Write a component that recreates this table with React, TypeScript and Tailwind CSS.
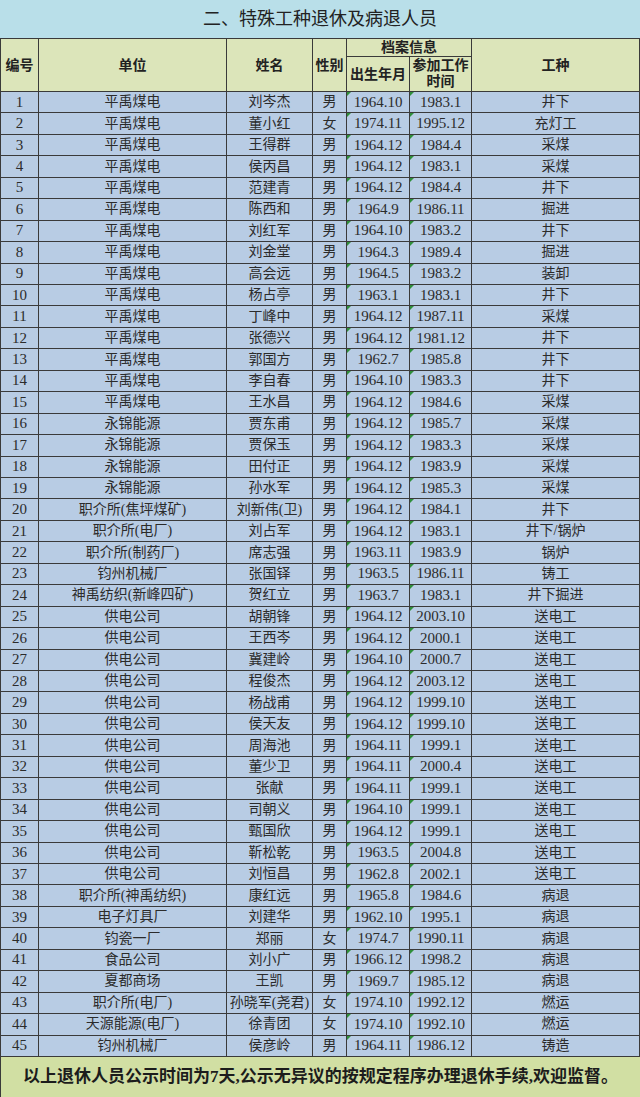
import React from "react";

type Row = [string, string, string, string, string, string, string];

const rows: Row[] = [
  ["1", "平禹煤电", "刘岑杰", "男", "1964.10", "1983.1", "井下"],
  ["2", "平禹煤电", "董小红", "女", "1974.11", "1995.12", "充灯工"],
  ["3", "平禹煤电", "王得群", "男", "1964.12", "1984.4", "采煤"],
  ["4", "平禹煤电", "侯丙昌", "男", "1964.12", "1983.1", "采煤"],
  ["5", "平禹煤电", "范建青", "男", "1964.12", "1984.4", "井下"],
  ["6", "平禹煤电", "陈西和", "男", "1964.9", "1986.11", "掘进"],
  ["7", "平禹煤电", "刘红军", "男", "1964.10", "1983.2", "井下"],
  ["8", "平禹煤电", "刘金堂", "男", "1964.3", "1989.4", "掘进"],
  ["9", "平禹煤电", "高会远", "男", "1964.5", "1983.2", "装卸"],
  ["10", "平禹煤电", "杨占亭", "男", "1963.1", "1983.1", "井下"],
  ["11", "平禹煤电", "丁峰中", "男", "1964.12", "1987.11", "采煤"],
  ["12", "平禹煤电", "张德兴", "男", "1964.12", "1981.12", "井下"],
  ["13", "平禹煤电", "郭国方", "男", "1962.7", "1985.8", "井下"],
  ["14", "平禹煤电", "李自春", "男", "1964.10", "1983.3", "井下"],
  ["15", "平禹煤电", "王水昌", "男", "1964.12", "1984.6", "采煤"],
  ["16", "永锦能源", "贾东甫", "男", "1964.12", "1985.7", "采煤"],
  ["17", "永锦能源", "贾保玉", "男", "1964.12", "1983.3", "采煤"],
  ["18", "永锦能源", "田付正", "男", "1964.12", "1983.9", "采煤"],
  ["19", "永锦能源", "孙水军", "男", "1964.12", "1985.3", "采煤"],
  ["20", "职介所(焦坪煤矿)", "刘新伟(卫)", "男", "1964.12", "1984.1", "井下"],
  ["21", "职介所(电厂)", "刘占军", "男", "1964.12", "1983.1", "井下/锅炉"],
  ["22", "职介所(制药厂)", "席志强", "男", "1963.11", "1983.9", "锅炉"],
  ["23", "钧州机械厂", "张国铎", "男", "1963.5", "1986.11", "铸工"],
  ["24", "神禹纺织(新峰四矿)", "贺红立", "男", "1963.7", "1983.1", "井下掘进"],
  ["25", "供电公司", "胡朝锋", "男", "1964.12", "2003.10", "送电工"],
  ["26", "供电公司", "王西岑", "男", "1964.12", "2000.1", "送电工"],
  ["27", "供电公司", "冀建岭", "男", "1964.10", "2000.7", "送电工"],
  ["28", "供电公司", "程俊杰", "男", "1964.12", "2003.12", "送电工"],
  ["29", "供电公司", "杨战甫", "男", "1964.12", "1999.10", "送电工"],
  ["30", "供电公司", "侯天友", "男", "1964.12", "1999.10", "送电工"],
  ["31", "供电公司", "周海池", "男", "1964.11", "1999.1", "送电工"],
  ["32", "供电公司", "董少卫", "男", "1964.11", "2000.4", "送电工"],
  ["33", "供电公司", "张献", "男", "1964.11", "1999.1", "送电工"],
  ["34", "供电公司", "司朝义", "男", "1964.10", "1999.1", "送电工"],
  ["35", "供电公司", "甄国欣", "男", "1964.12", "1999.1", "送电工"],
  ["36", "供电公司", "靳松乾", "男", "1963.5", "2004.8", "送电工"],
  ["37", "供电公司", "刘恒昌", "男", "1962.8", "2002.1", "送电工"],
  ["38", "职介所(神禹纺织)", "康红远", "男", "1965.8", "1984.6", "病退"],
  ["39", "电子灯具厂", "刘建华", "男", "1962.10", "1995.1", "病退"],
  ["40", "钧瓷一厂", "郑丽", "女", "1974.7", "1990.11", "病退"],
  ["41", "食品公司", "刘小广", "男", "1966.12", "1998.2", "病退"],
  ["42", "夏都商场", "王凯", "男", "1969.7", "1985.12", "病退"],
  ["43", "职介所(电厂)", "孙晓军(尧君)", "女", "1974.10", "1992.12", "燃运"],
  ["44", "天源能源(电厂)", "徐青团", "女", "1974.10", "1992.10", "燃运"],
  ["45", "钧州机械厂", "侯彦岭", "男", "1964.11", "1986.12", "铸造"],
];

const cols = "grid-cols-[39px_188px_86px_34px_63px_62px_168px]";
const cell =
  "relative flex items-center justify-center whitespace-nowrap overflow-hidden border-r border-b border-[#3a3a3a]";

export default function App() {
  return (
    <div className="w-[640px] h-[1097px] flex flex-col bg-white text-[#2b2b2b] font-['Liberation_Serif','Noto_Sans_CJK_SC',serif]">
      {/* Title */}
      <div className="h-[39px] shrink-0 flex items-center justify-center bg-[#b9dfe9] border-b border-[#3a3a3a] text-[18px] text-[#222]">
        二、特殊工种退休及病退人员
      </div>

      {/* Header */}
      <div className={`grid ${cols} grid-rows-[18px_35px] h-[53px] shrink-0 bg-[#dce5ba] font-bold text-[14px] text-[#222]`}>
        <div className={`${cell} border-l row-span-2`}>编号</div>
        <div className={`${cell} row-span-2`}>单位</div>
        <div className={`${cell} row-span-2`}>姓名</div>
        <div className={`${cell} row-span-2`}>性别</div>
        <div className={`${cell} col-span-2 leading-none`}>档案信息</div>
        <div className={`${cell} col-start-7 row-span-2`}>工种</div>
        <div className={`${cell} col-start-5 row-start-2`}>出生年月</div>
        <div className={`${cell} col-start-6 row-start-2 flex-col leading-[16px]`}>
          <span>参加工作</span>
          <span>时间</span>
        </div>
      </div>

      {/* Body */}
      <div className={`grid ${cols} grid-rows-[repeat(45,minmax(0,1fr))] h-[965px] shrink-0 bg-[#b8cce4] text-[14px] leading-none`}>
        {rows.map((r) => (
          <React.Fragment key={r[0]}>
            <div className={`${cell} border-l text-[15px]`}>{r[0]}</div>
            <div className={cell}>{r[1]}</div>
            <div className={cell}>{r[2]}</div>
            <div className={cell}>{r[3]}</div>
            <div className={`${cell} text-[15px]`}>
              <span className="absolute top-0 left-0 w-0 h-0 border-t-[4px] border-r-[4px] border-t-[#2f8f3a] border-r-transparent" />
              {r[4]}
            </div>
            <div className={`${cell} text-[15px]`}>
              <span className="absolute top-0 left-0 w-0 h-0 border-t-[4px] border-r-[4px] border-t-[#2f8f3a] border-r-transparent" />
              {r[5]}
            </div>
            <div className={cell}>{r[6]}</div>
          </React.Fragment>
        ))}
      </div>

      {/* Footer */}
      <div className="flex-1 flex items-center justify-center bg-[#d1dfa3] border-l border-[#3a3a3a] font-bold text-[17px] text-[#1c1c1c] whitespace-nowrap">
        以上退休人员公示时间为7天,公示无异议的按规定程序办理退休手续,欢迎监督。
      </div>
    </div>
  );
}
